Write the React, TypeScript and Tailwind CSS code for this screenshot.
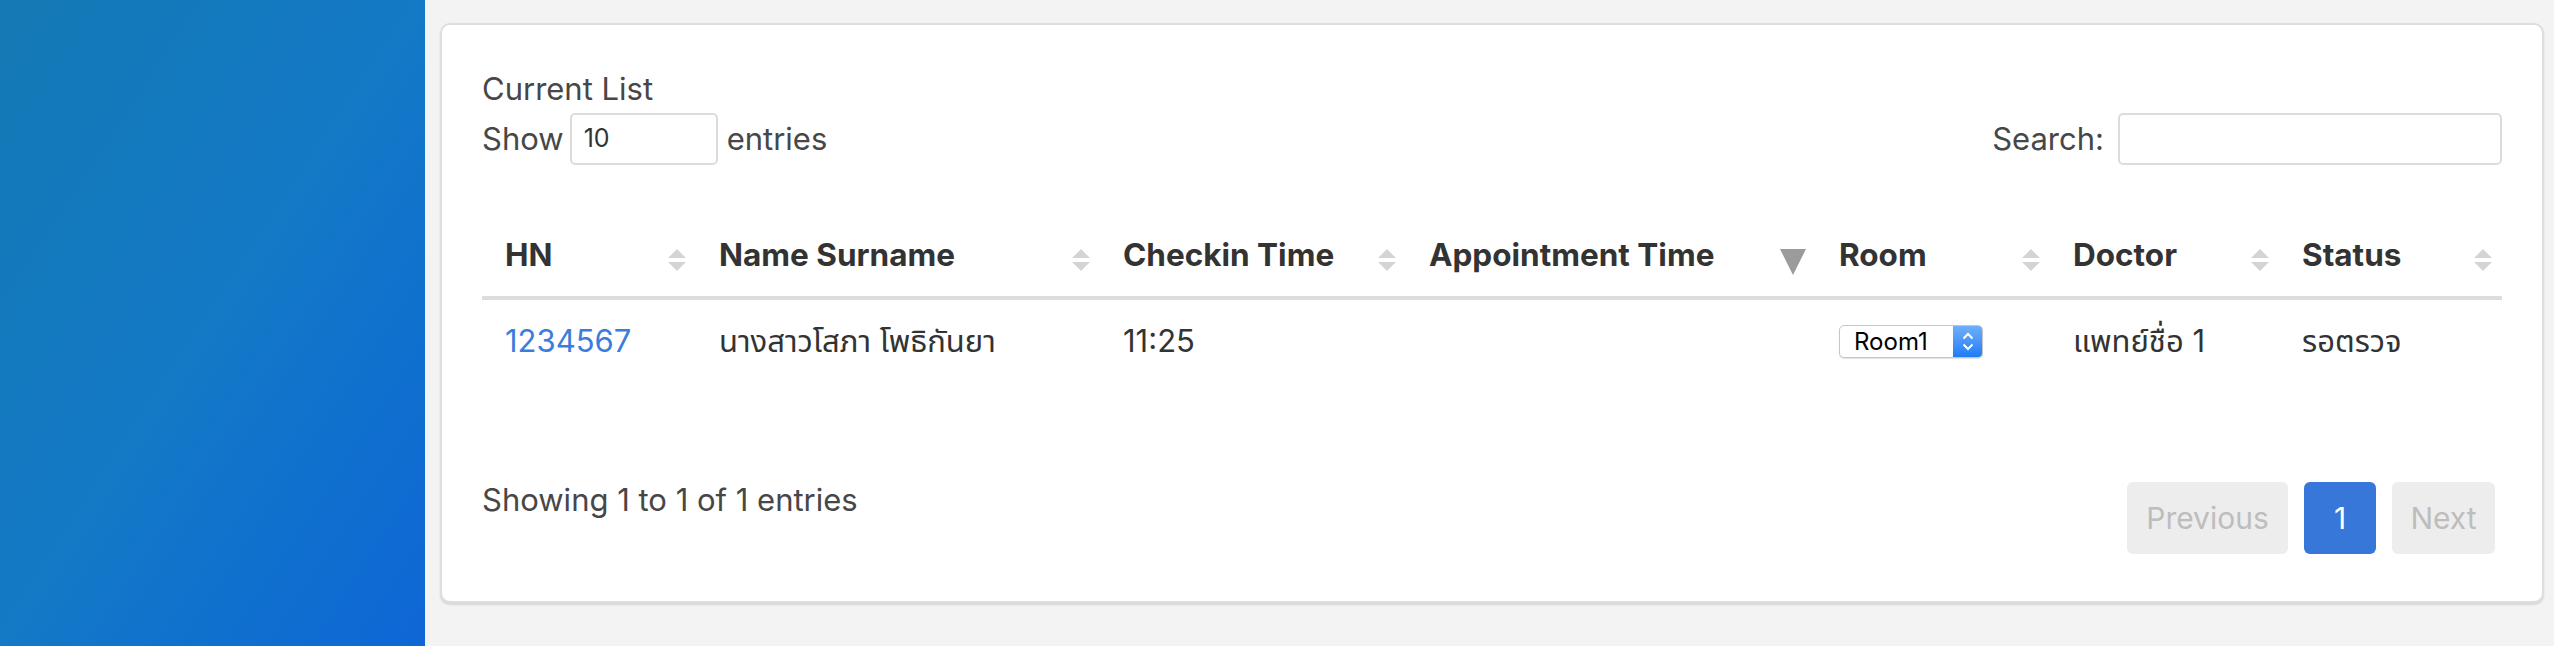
import React from 'react';

const font = { fontFamily: 'Inter, "Noto Sans Thai", "Noto Sans", "DejaVu Sans", sans-serif' };

const SortBoth = () => (
  <svg width="18" height="22" viewBox="0 0 18 22" className="shrink-0 mt-[12px]">
    <path d="M0 9 L9 0 L18 9 Z" fill="#d4d4d4" />
    <path d="M0 13 L18 13 L9 22 Z" fill="#d4d4d4" />
  </svg>
);

const SortDesc = () => (
  <svg width="26" height="26" viewBox="0 0 26 26" className="shrink-0 mt-[12px]">
    <path d="M0 0 L26 0 L13 26 Z" fill="#9b9b9b" />
  </svg>
);

type Col = { label: string; width: string; desc?: boolean };

const columns: Col[] = [
  { label: 'HN', width: 'w-[214px]' },
  { label: 'Name Surname', width: 'w-[404px]' },
  { label: 'Checkin Time', width: 'w-[306px]' },
  { label: 'Appointment Time', width: 'w-[410px]', desc: true },
  { label: 'Room', width: 'w-[234px]' },
  { label: 'Doctor', width: 'w-[229px]' },
  { label: 'Status', width: 'w-[223px]' },
];

const RoomSelect = () => (
  <div className="flex h-[33px] w-[144px] items-stretch overflow-hidden rounded-[5px] border border-[#c6c6c6] bg-white shadow-[0_1px_1px_rgba(0,0,0,0.12)]">
    <span className="flex-1 pl-[14px] text-[24px] leading-[31px] text-black">Room1</span>
    <span className="flex w-[29px] flex-col items-center justify-center gap-[3px] bg-linear-to-b from-[#6eaefa] to-[#1a7cf7]">
      <svg width="12" height="8" viewBox="0 0 12 8">
        <path d="M1.5 6.5 L6 2 L10.5 6.5" stroke="white" strokeWidth="2" fill="none" />
      </svg>
      <svg width="12" height="8" viewBox="0 0 12 8">
        <path d="M1.5 1.5 L6 6 L10.5 1.5" stroke="white" strokeWidth="2" fill="none" />
      </svg>
    </span>
  </div>
);

export default function App() {
  return (
    <div className="flex h-[646px] w-full bg-[#f3f3f3]" style={font}>
      <aside className="h-full w-[425px] shrink-0 bg-linear-to-br from-[#1479b4] via-[#1479c6] to-[#0f66d6]" />

      <main className="flex-1 pt-[23px] pl-[15px] pr-[11px]">
        <div className="rounded-[10px] border-2 border-[#dedede] bg-white px-[40px] pt-[46px] pb-[47px] shadow-[0_2px_2px_rgba(0,0,0,0.12)]">
          <div className="text-[31px] leading-[36px] text-[#474747]">Current List</div>

          <div className="mt-[6px] flex items-center justify-between text-[31px] text-[#474747]">
            <div className="flex items-center">
              <span>Show</span>
              <div className="ml-[6px] flex h-[52px] w-[148px] items-center rounded-[5px] border-2 border-[#dcdcdc] pl-[12px] text-[25px] text-[#333]">
                10
              </div>
              <span className="ml-[9px]">entries</span>
            </div>
            <div className="flex items-center">
              <span>Search:</span>
              <div className="ml-[14px] h-[52px] w-[384px] rounded-[5px] border-2 border-[#dcdcdc]" />
            </div>
          </div>

          <table className="mt-[51px] w-full table-fixed border-collapse">
            <colgroup>
              {columns.map(c => (
                <col key={c.label} className={c.width} />
              ))}
            </colgroup>
            <thead>
              <tr className="border-b-4 border-[#dddddd]">
                {columns.map(c => (
                  <th key={c.label} className="py-[21px] pl-[23px] pr-[10px] text-left align-top">
                    <div className="flex items-start justify-between text-[31.5px] font-bold leading-[36px] text-[#333]">
                      <span>{c.label}</span>
                      {c.desc ? <SortDesc /> : <SortBoth />}
                    </div>
                  </th>
                ))}
              </tr>
            </thead>
            <tbody>
              <tr className="text-[31px] leading-[36px] text-[#333]">
                <td className="py-[23px] pl-[23px] text-[#3b7ddc]">1234567</td>
                <td className="py-[23px] pl-[23px]">นางสาวโสภา โพธิกันยา</td>
                <td className="py-[23px] pl-[23px]">11:25</td>
                <td className="py-[23px] pl-[23px]"></td>
                <td className="py-[23px] pl-[23px] align-middle">
                  <RoomSelect />
                </td>
                <td className="py-[23px] pl-[23px]">แพทย์ชื่อ 1</td>
                <td className="py-[23px] pl-[23px]">รอตรวจ</td>
              </tr>
            </tbody>
          </table>

          <div className="mt-[100px] flex items-start justify-between">
            <div className="text-[31px] leading-[36px] text-[#474747]">Showing 1 to 1 of 1 entries</div>
            <div className="mr-[7px] flex gap-[16px] text-[30px]">
              <span className="flex h-[72px] w-[161px] items-center justify-center rounded-[6px] bg-[#ededed] text-[#bdbdbd]">
                Previous
              </span>
              <span className="flex h-[72px] w-[72px] items-center justify-center rounded-[6px] bg-[#3777d9] text-white">
                1
              </span>
              <span className="flex h-[72px] w-[103px] items-center justify-center rounded-[6px] bg-[#ededed] text-[#bdbdbd]">
                Next
              </span>
            </div>
          </div>
        </div>
      </main>
    </div>
  );
}
